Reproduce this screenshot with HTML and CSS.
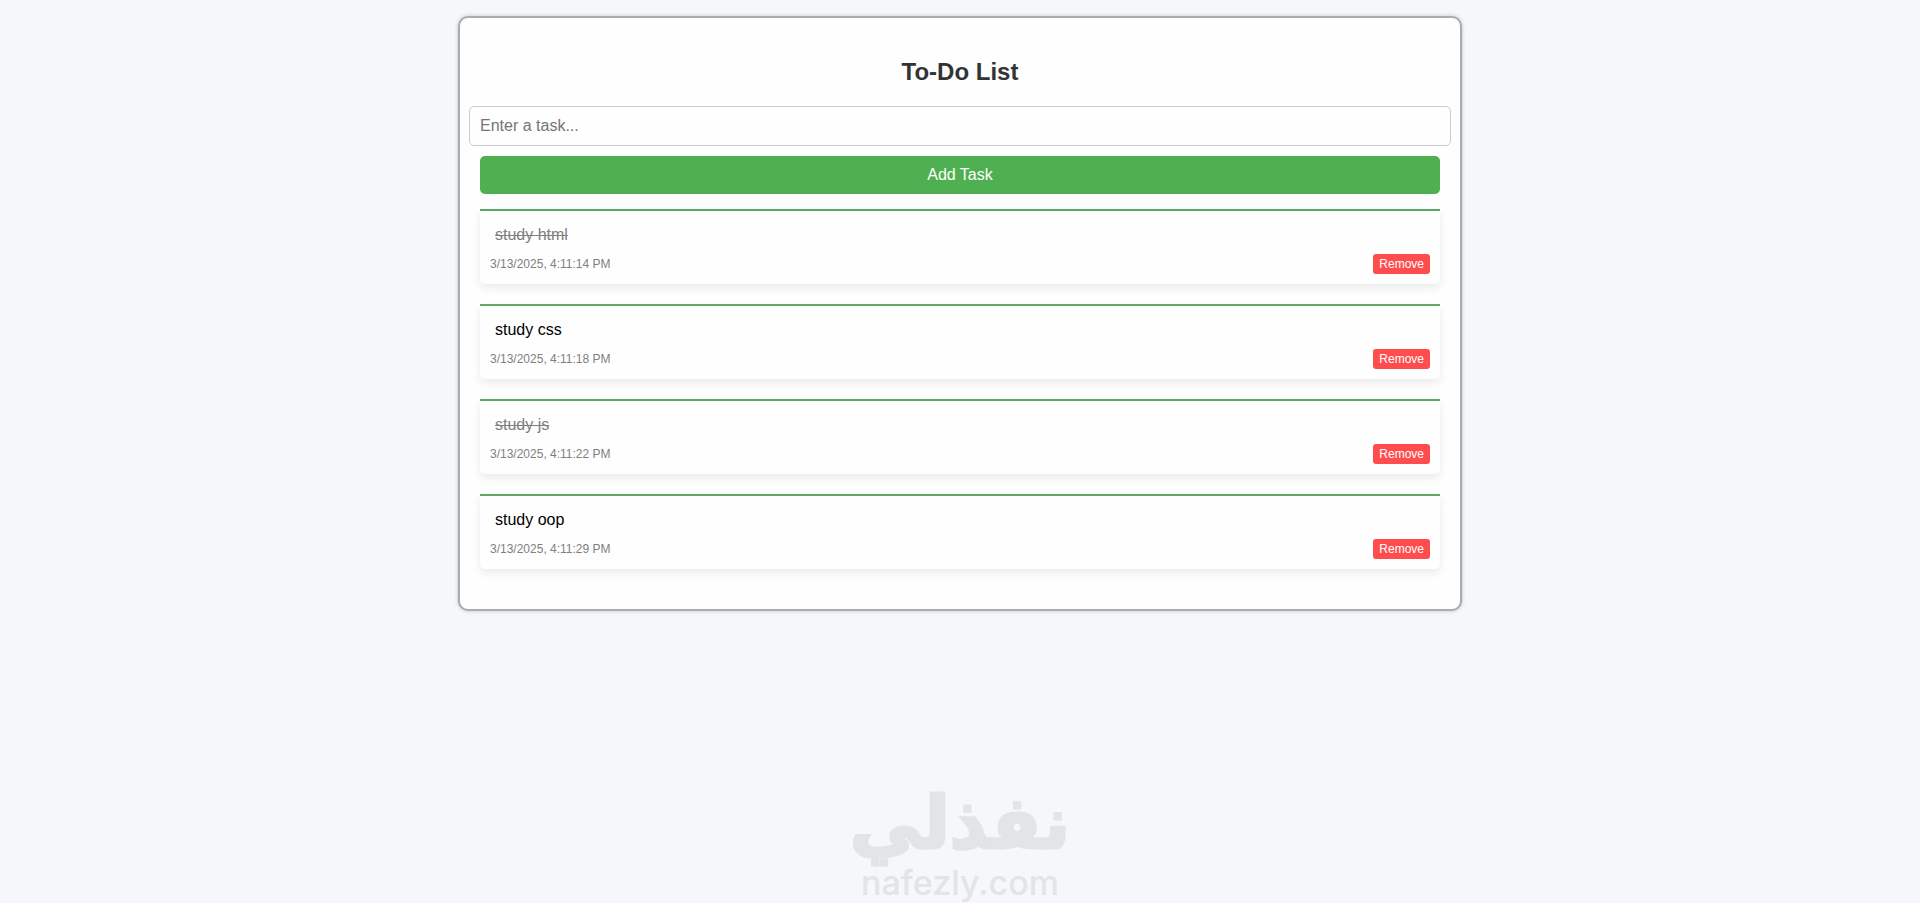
FILE: index.html
```html
<!DOCTYPE html>
<html lang="en">

<head>
    <meta charset="UTF-8">
    <meta name="viewport" content="width=device-width, initial-scale=1.0">
    <title>To-Do List</title>
    <link rel="stylesheet" href="styles.css">
</head>

<body>
    <main class="container">
        <h2>To-Do List</h2>
        <form class="task-form">
            <input type="text" id="taskInput" aria-label="Task" placeholder="Enter a task...">
            <button type="button" class="add-btn">Add Task</button>
        </form>

        <ul class="task-list">
            <li class="task">
                <span class="task-text completed">study html</span>
                <div class="task-info">
                    <span class="date">3/13/2025, 4:11:14 PM</span>
                    <button type="button" class="remove-btn">Remove</button>
                </div>
            </li>
            <li class="task">
                <span class="task-text">study css</span>
                <div class="task-info">
                    <span class="date">3/13/2025, 4:11:18 PM</span>
                    <button type="button" class="remove-btn">Remove</button>
                </div>
            </li>
            <li class="task">
                <span class="task-text completed">study js</span>
                <div class="task-info">
                    <span class="date">3/13/2025, 4:11:22 PM</span>
                    <button type="button" class="remove-btn">Remove</button>
                </div>
            </li>
            <li class="task">
                <span class="task-text">study oop</span>
                <div class="task-info">
                    <span class="date">3/13/2025, 4:11:29 PM</span>
                    <button type="button" class="remove-btn">Remove</button>
                </div>
            </li>
        </ul>
    </main>

    <footer class="brand">
        <span class="brand-name" lang="ar" dir="rtl">نفذلي</span>
        <span class="brand-site">nafezly.com</span>
    </footer>
</body>

</html>
```
FILE: styles.css
```css
* {
    margin: 0;
    padding: 0;
    box-sizing: border-box;
}
body {
    min-height: 100vh;
    padding-top: 16px;
    display: flex;
    flex-direction: column;
    align-items: center;
    font-family: Arial, "Liberation Sans", sans-serif;
    background-color: #f5f7fb;
}
.container {
    width: 100%;
    max-width: 1004px;
    padding: 20px 9px;
    background-color: #fefefe;
    border: 2px solid #a9abb0;
    border-radius: 10px;
    box-shadow: 0 0 4px rgba(0, 0, 0, 0.2);
}
h2 {
    margin: 20px 0;
    font-size: 24px;
    line-height: 28px;
    text-align: center;
    color: #333;
}
.task-form {
    display: flex;
    flex-direction: column;
    gap: 10px;
}
#taskInput {
    height: 40px;
    padding: 10px;
    font-family: inherit;
    font-size: 16px;
    border: 1px solid #ccc;
    border-radius: 5px;
    background-color: #fefefe;
}
.add-btn {
    height: 38px;
    margin: 0 11px;
    font-family: inherit;
    font-size: 16px;
    color: white;
    background-color: #4fb052;
    border: none;
    border-radius: 5px;
    cursor: pointer;
}
.task-list {
    margin: 15px 11px 0;
    list-style: none;
}
.task {
    margin-bottom: 20px;
    padding: 10px;
    border-top: 2px solid #5fa863;
    border-radius: 0 0 5px 5px;
    background-color: #fefefe;
    box-shadow: 0 4px 8px rgba(0, 0, 0, 0.08);
}
.task-text {
    display: block;
    margin-bottom: 5px;
    padding: 5px;
    font-size: 16px;
    line-height: 18px;
    color: black;
    cursor: pointer;
}
.completed {
    color: gray;
    text-decoration: line-through;
}
.task-info {
    display: flex;
    justify-content: space-between;
    align-items: center;
}
.date {
    font-size: 12px;
    color: gray;
}
.remove-btn {
    height: 20px;
    padding: 3px 6px;
    font-family: inherit;
    font-size: 12px;
    line-height: 14px;
    color: white;
    background-color: #ff4d4d;
    border: none;
    border-radius: 3px;
    cursor: pointer;
}
.brand {
    margin-top: auto;
    display: flex;
    flex-direction: column;
    align-items: center;
    color: #e2e4e5;
}
.brand-name {
    font-family: "DejaVu Sans", sans-serif;
    font-size: 72px;
    font-weight: bold;
    line-height: 80px;
    -webkit-text-stroke: 3px #e2e4e5;
}
.brand-site {
    font-family: Inter, sans-serif;
    font-size: 34px;
    font-weight: 500;
    line-height: 40px;
}
```
